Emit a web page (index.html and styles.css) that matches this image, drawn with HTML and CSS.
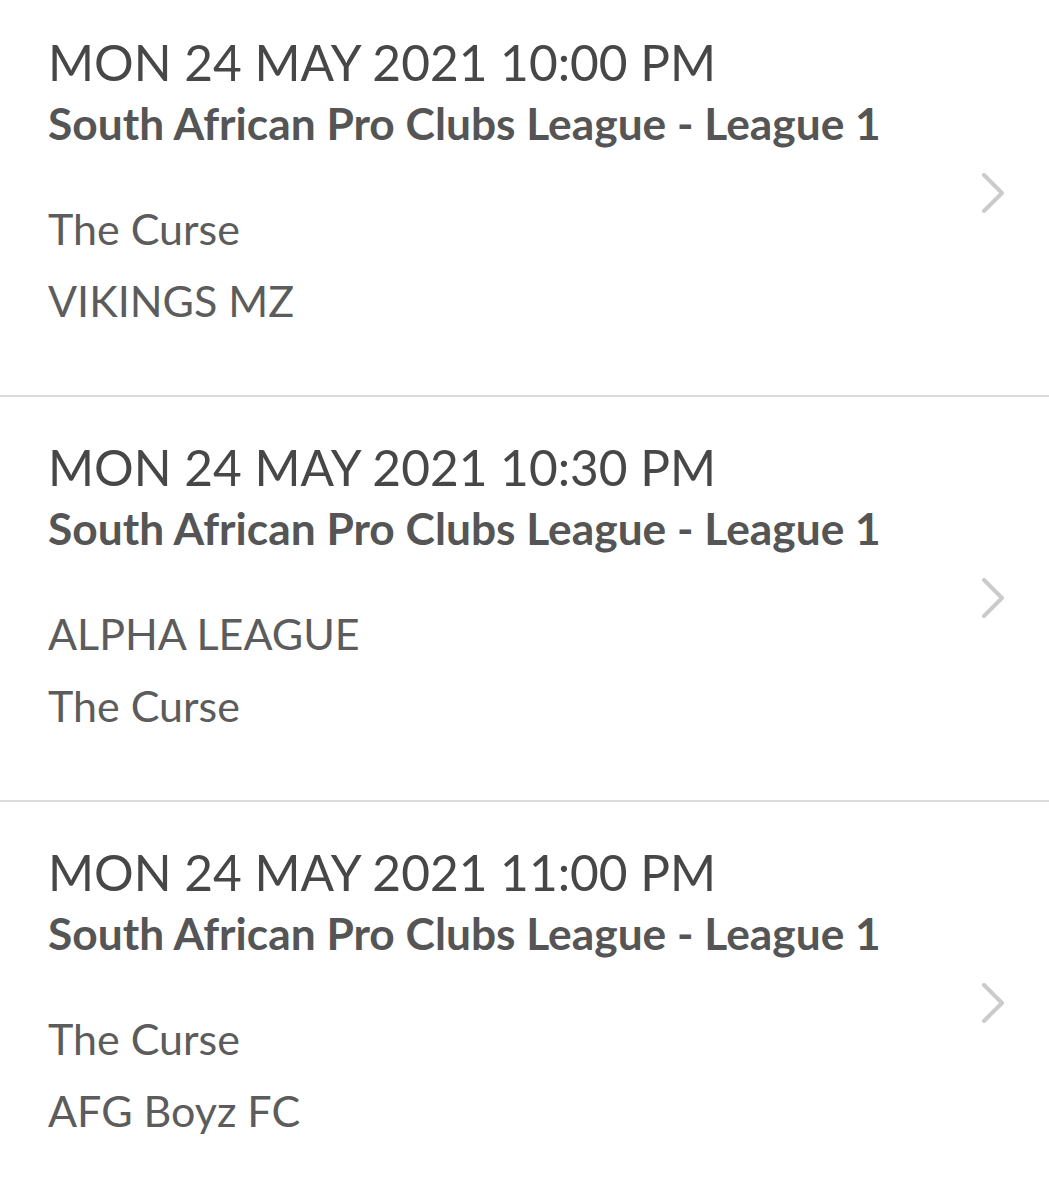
FILE: index.html
```html
<!DOCTYPE html>
<html lang="en">
<head>
  <meta charset="UTF-8">
  <title>Fixtures</title>
  <link rel="stylesheet" href="styles.css">
</head>
<body>

  <!-- fixtures list -->
  <div class="fixtures">

    <div class="fixture">
      <div class="info">
        <div class="date">MON 24 MAY 2021 10:00 PM</div>
        <div class="league">South African Pro Clubs League - League 1</div>
        <div class="team first">The Curse</div>
        <div class="team">VIKINGS MZ</div>
      </div>
      <svg class="chevron" width="24" height="40" viewBox="0 0 24 40"><polyline points="3,2 21,20 3,38"/></svg>
    </div>

    <div class="fixture">
      <div class="info">
        <div class="date">MON 24 MAY 2021 10:30 PM</div>
        <div class="league">South African Pro Clubs League - League 1</div>
        <div class="team first">ALPHA LEAGUE</div>
        <div class="team">The Curse</div>
      </div>
      <svg class="chevron" width="24" height="40" viewBox="0 0 24 40"><polyline points="3,2 21,20 3,38"/></svg>
    </div>

    <div class="fixture">
      <div class="info">
        <div class="date">MON 24 MAY 2021 11:00 PM</div>
        <div class="league">South African Pro Clubs League - League 1</div>
        <div class="team first">The Curse</div>
        <div class="team">AFG Boyz FC</div>
      </div>
      <svg class="chevron" width="24" height="40" viewBox="0 0 24 40"><polyline points="3,2 21,20 3,38"/></svg>
    </div>

  </div>

</body>
</html>
```

FILE: styles.css
```css
body {
  margin: 0;
  background: #fff;
  font-family: Lato, "Noto Sans", sans-serif;
}

.fixtures {
  margin-top: -8px;
}

.fixture {
  display: flex;
  align-items: center;
  padding: 40px 44px 69px 48px;
  border-bottom: 2px solid #dcdcdc;
}

.info {
  flex: 1;
}

.date {
  font-size: 49.6px;
  line-height: 60px;
  color: #474747;
}

.league {
  margin-top: 5px;
  font-size: 44.3px;
  line-height: 52px;
  font-weight: bold;
  color: #555;
}

.team {
  margin-top: 22px;
  font-size: 43px;
  line-height: 50px;
  color: #5c5c5c;
}

.team.first {
  margin-top: 55px;
}

.chevron {
  margin-top: 28px;
}

.chevron polyline {
  fill: none;
  stroke: #cbcbcb;
  stroke-width: 4;
  stroke-linecap: round;
  stroke-linejoin: round;
}
```
